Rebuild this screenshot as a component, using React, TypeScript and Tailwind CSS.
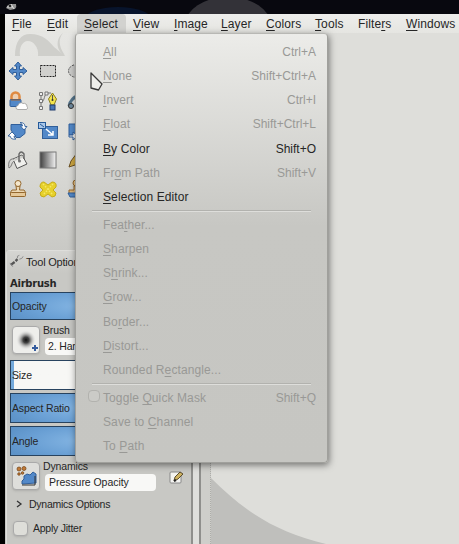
import React from "react";

/** Renders a label whose mnemonic letter follows an underscore. */
function Label({ text }: { text: string }) {
  const i = text.indexOf("_");
  if (i < 0) return <>{text}</>;
  return (
    <>
      {text.slice(0, i)}
      <span className="underline underline-offset-2">{text[i + 1]}</span>
      {text.slice(i + 2)}
    </>
  );
}

type Item = { label: string; keys?: string; on?: boolean; check?: boolean };

const groups: Item[][] = [
  [
    { label: "_All", keys: "Ctrl+A" },
    { label: "_None", keys: "Shift+Ctrl+A" },
    { label: "_Invert", keys: "Ctrl+I" },
    { label: "_Float", keys: "Shift+Ctrl+L" },
    { label: "_By Color", keys: "Shift+O", on: true },
    { label: "Fr_om Path", keys: "Shift+V" },
    { label: "_Selection Editor", on: true },
  ],
  [
    { label: "Fea_ther..." },
    { label: "_Sharpen" },
    { label: "S_hrink..." },
    { label: "_Grow..." },
    { label: "Bo_rder..." },
    { label: "_Distort..." },
    { label: "Rounded R_ectangle..." },
  ],
  [
    { label: "Toggle _Quick Mask", keys: "Shift+Q", check: true },
    { label: "Save to _Channel" },
    { label: "To _Path" },
  ],
];

const Icon = ({ children }: { children: React.ReactNode }) => (
  <svg viewBox="0 0 20 20" className="h-5 w-5">
    {children}
  </svg>
);

const blue = { fill: "#5288c8", stroke: "#315f9a", strokeWidth: 1 };

const tools: React.ReactNode[] = [
  <path {...blue} d="M10 1l3.500 4h-2v3.500h3.500v-2l4 3.500-4 3.500v-2h-3.500v3.500h2L10 19l-3.500-4h2v-3.500H5v2L1 10l4-3.500v2h3.500V5h-2z" />,
  <>
    <rect x="2.500" y="4.500" width="15" height="11" fill="#d0d0cd" />
    <rect x="2.500" y="4.500" width="15" height="11" fill="none" stroke="#222" strokeDasharray="2 1" />
  </>,
  <ellipse cx="10" cy="10" rx="8.500" ry="6.500" fill="#ccccca" stroke="#555" strokeDasharray="2 1" />,
  <>
    <path d="M3.500 9V5.500a4 4 0 018 0V9" fill="#ecd0b4" stroke="#df8a42" strokeWidth="2.500" />
    <rect x="2" y="8.500" width="11" height="7" rx="1" {...blue} />
    <path d="M3 9h9" stroke="#9d6535" />
    <path d="M10 18.500a2 2 0 010-4 3 3 0 015-2 3 3 0 014 3 1.700 1.700 0 01-1 3z" fill="#fff" stroke="#999" strokeWidth=".8" />
  </>,
  <>
    <path d="M3 3v15M3 12C7 10 6 3 9 2h4" fill="none" stroke="#777" />
    <path d="M1.500 1.500h3v3h-3zM1.500 8.500h3v3h-3zM1.500 15.500h3v3h-3zM7 1h3v3H7z" fill="#eee" stroke="#777" />
    <path d="M14.500 2l4 6-2.500 6h-3l-2.500-6z" fill="#f3e44d" stroke="#8b7e22" />
    <path d="M14.500 4v5" stroke="#555" />
    <circle cx="14.500" cy="9" r="1" fill="#333" />
    <rect x="12" y="14" width="5" height="5" fill="#4976b5" stroke="#203d6f" />
  </>,
  <>
    <path d="M2 15C3 10 7 6 12 4" fill="none" stroke="#54738a" strokeWidth="3" />
    <circle cx="4" cy="15" r="2.500" fill="#6f8ba0" stroke="#333" />
  </>,
  <>
    <path {...blue} d="M3 3.500h11l3 3v6l-5 4H8L3 9z" />
    <path d="M0 15l4-4 4 4H6q0 2.500 2 3-5 1-6-3zM12 1.500q5 0 5 4l2 0-3 3.500-3.500-4h2q0-2-2.500-3.500z" fill="#fff" stroke="#315f9a" strokeWidth=".9" />
  </>,
  <>
    <rect x="4.500" y="5.500" width="15" height="12" {...blue} />
    <rect x=".5" y="1.500" width="7" height="6" fill="#a9c7e9" stroke="#245998" />
    <path d="M8 8l7 6m0-4v4h-5" fill="none" stroke="#fff" strokeWidth="1.500" />
    <path d="M2 3l4 3" stroke="#245998" />
  </>,
  <>
    <path {...blue} d="M2 3h15l-3 11H2z" />
    <path d="M2 14h4v-3l5 4-5 4v-3H2z" fill="#eee" stroke="#315f9a" />
  </>,
  <>
    <path d="M5 9L14 5l5 9-10 4.500z" fill="#f0f0ed" stroke="#555" />
    <path d="M6 9L14 5.500l1.500 2L7 11z" fill="#cfcfcb" />
    <path d="M6 9C1 8 0 14 1 18c3-1 2-5 5-7" fill="#d7d7d4" stroke="#777" />
    <path d="M11 11V4q2-4 5 0v5" fill="none" stroke="#666" strokeWidth="1.400" />
    <circle cx="11.500" cy="11" r="1.500" fill="#777" />
  </>,
  <>
    <defs>
      <linearGradient id="fade">
        <stop stopColor="#3f3f3f" />
        <stop offset="1" stopColor="#f5f5f5" />
      </linearGradient>
    </defs>
    <rect x="2" y="2" width="16" height="16" fill="url(#fade)" stroke="#777" />
  </>,
  <path d="M2 17l2-6L10 3l5 3-7 9z" fill="#cda743" stroke="#6b5123" />,
  <>
    <path d="M8 7h4l-.5 4H16l2 3H2l2-3h4.500z" fill="#ecd8b4" stroke="#94672d" />
    <circle cx="10" cy="4.500" r="3" fill="#f4e6cb" stroke="#94672d" />
    <rect x="2.500" y="13.500" width="15" height="4" rx="1" fill="#e6c898" stroke="#94672d" />
  </>,
  <>
    <path d="M6 3l4 3 4-3q5 0 4 5l-3 3 3 3q0 4-4 4l-4-3-4 3q-4 0-4-4l3-3-3-3q0-5 4-5z" fill="#e6d02c" stroke="#c6ad19" strokeLinejoin="round" />
    <path d="M5 5l10 11M15 5L5 16" stroke="#f5e866" strokeWidth="1.500" strokeDasharray="1.500 1.500" />
  </>,
  <>
    <circle cx="9" cy="4" r="3" fill="#e8c58b" stroke="#94672d" />
    <path d="M7 7h4v4h5v4H2v-4h5z" fill="#dfb678" stroke="#94672d" />
    <path {...blue} d="M1 14h14v4H3z" />
  </>,
];

function Slider({ name, className }: { name: string; className: string }) {
  return (
    <div
      className={`flex w-[176px] shrink-0 items-center border border-[#28435f] pl-px ${className}`}
    >
      {name}
    </div>
  );
}

const blueFill =
  "bg-[radial-gradient(ellipse_75px_22px_at_67px_50%,#83b4e2,#699fd4_65%,#5d93c8)]";

export default function App() {
  const menus = [
    ["_File", "w-[35px]"],
    ["_Edit", "w-[37px]"],
    ["_Select", "w-[49px]"],
    ["_View", "w-[41px]"],
    ["_Image", "w-[47px]"],
    ["_Layer", "w-[45px]"],
    ["_Colors", "w-[49px]"],
    ["_Tools", "w-[43px]"],
    ["Filte_rs", "w-[48px]"],
    ["_Windows", "w-[59px]"],
  ];
  return (
    <div className="relative flex h-[544px] w-[459px] flex-col overflow-hidden bg-black font-['Liberation_Sans',Arial,sans-serif] text-[12px] leading-none text-[#262626]">
      <header className="h-3.5 shrink-0 bg-[#08080f]">
        <svg viewBox="0 0 459 14" className="block h-3.5 w-[459px]">
          <ellipse cx="118" cy="20" rx="34" ry="13" fill="#08142c" />
          <ellipse cx="228" cy="25" rx="43" ry="28" fill="#333238" />
          <path d="M6 8q1-3 4-4l6 0q1 3-1 5l-5 1z" fill="#929292" />
          <path d="M7 7h6M11 4l3 5" stroke="#ddd" />
          <circle cx="10" cy="6" r="1.200" fill="#222" />
        </svg>
      </header>

      <div className="ml-[5px] flex h-[530px] flex-col bg-[#dcdcd8]">
        <nav className="flex h-[19px] shrink-0 bg-gradient-to-b from-[#eeeeec] to-[#e5e5e1] tracking-[.1px]">
          {menus.map(([m, w]) => (
            <div
              key={m}
              className={`flex shrink-0 items-center whitespace-nowrap pl-[7px] pt-px ${w} ${m === "_Select" ? "rounded-t bg-[#d2d2cf] pl-[6px]" : ""}`}
            >
              <span>
                <Label text={m} />
              </span>
            </div>
          ))}
        </nav>

        <div className="flex min-h-0 flex-1">
          <aside className="flex w-[186px] shrink-0 flex-col bg-[#c6c6c2]">
            <div className="h-[217px] shrink-0 bg-gradient-to-b from-[#e6e6e3] via-[#dededa] to-[#c9c9c5]">
              <svg viewBox="0 0 100 23" className="mb-[5px] block h-[23px] w-[100px]">
                <path d="M10 23C10 8 16 1 25 1C38 1 44 8 49 14L60 23H33C34 14 28 8 23 8C17 8 14 15 15 23Z" fill="#cfcfcb" />
                <path d="M58 0C53 6 54 13 59 21L60 23C50 17 51 5 58 0Z" fill="#cfcfcb" />
              </svg>
              <div className="grid grid-cols-[30px_29px_29px] grid-rows-[30px_30px_29px_29px_28px] pl-[3px]">
                {tools.map((t, i) => (
                  <Icon key={i}>{t}</Icon>
                ))}
              </div>
            </div>

            <section className="ml-px flex flex-1 flex-col rounded-tl border-l border-t border-[#dededb] bg-[#c8c8c4]">
              <div className="flex h-[22px] shrink-0 items-center bg-gradient-to-b from-[#d5d5d2] to-[#c8c8c4] pl-[2px] text-[11px] tracking-[-.2px]">
                <svg viewBox="0 0 17 18" className="mr-px h-[18px] w-[16px]">
                  <path d="M2 12l4-3M7 8l2-2" stroke="#555" strokeWidth="2.500" />
                  <path d="M1 10l3 4M9 5q-1-3 2-3m0 4q3 0 4-3" fill="none" stroke="#888" />
                </svg>
                Tool Option
              </div>
              <h1 className="flex h-[19px] shrink-0 items-center pl-[3px] pt-[2px] font-['DejaVu_Sans',sans-serif] text-[10px] font-bold tracking-[-.25px]">
                Airbrush
              </h1>
              <div className="flex flex-col pl-[3px] text-[10.5px] tracking-[-.15px]">
                <Slider name="Opacity" className={`h-[28px] ${blueFill}`} />
                <div className="flex h-[40px] pt-[6px]">
                  <div className="ml-[2px] flex h-[28px] w-[28px] shrink-0 items-center justify-center rounded border border-[#aaa] bg-[#eeeeeb] shadow-sm">
                    <svg viewBox="0 0 26 26" className="h-[26px] w-[26px]">
                      <defs>
                        <radialGradient id="brush">
                          <stop stopColor="#111" />
                          <stop offset=".3" stopColor="#444" />
                          <stop offset="1" stopColor="#eee" stopOpacity="0" />
                        </radialGradient>
                      </defs>
                      <circle cx="13" cy="13" r="10" fill="url(#brush)" />
                      <path d="M19 21h6m-3-3v6" stroke="#355c9e" strokeWidth="2" />
                    </svg>
                  </div>
                  <div className="ml-[2px] -mt-px flex flex-col">
                    <span className="pl-px">Brush</span>
                    <div className="ml-[3px] mt-[2px] flex h-[17px] w-[112px] items-center rounded bg-[#f8f8f6] pl-[3px]">2. Har</div>
                  </div>
                </div>
                <Slider name="Size" className="h-[30px] bg-gradient-to-r from-[#73a9dc] from-[3px] to-[#f7f7f5] to-[3px]" />
                <Slider name="Aspect Ratio" className={`mt-[3px] h-[30px] ${blueFill}`} />
                <Slider name="Angle" className={`mt-[3px] h-[30px] ${blueFill}`} />
                <div className="flex h-[37px] pt-[6px]">
                  <div className="ml-[2px] flex h-[28px] w-[28px] shrink-0 items-center justify-center rounded border border-[#aaa] bg-[#dededb] shadow-sm">
                    <svg viewBox="0 0 24 24" className="h-6 w-6">
                      <path d="M8 20v-3l2-2v-3l3-2 3 1 3-3 3 2v9z" {...blue} />
                      <path d="M21 12v9H8" fill="none" stroke="#333" />
                      <g fill="#c17a37" stroke="#704015" strokeWidth=".7">
                        <circle cx="5" cy="5" r="2" />
                        <circle cx="10" cy="4.500" r="2" />
                        <circle cx="5" cy="10" r="1.300" />
                        <circle cx="8.500" cy="9" r="1.300" />
                      </g>
                    </svg>
                  </div>
                  <div className="ml-[2px] -mt-px flex flex-col">
                    <span className="pl-px">Dynamics</span>
                    <div className="ml-[3px] mt-[2px] flex h-[17px] w-[111px] items-center rounded bg-[#f8f8f6] pl-[4px] tracking-[-.05px]">Pressure Opacity</div>
                  </div>
                  <svg viewBox="0 0 15 15" className="ml-[13px] mt-[8px] h-[15px] w-[15px]">
                    <rect x="1" y="2" width="11" height="11" rx="1" fill="#f4f4f1" stroke="#888" />
                    <path d="M5 11l1-4 5-5 3 2-5 5z" fill="#ceb260" stroke="#5a4c2c" />
                    <path d="M5 11l2-1" stroke="#222" strokeWidth="2" />
                  </svg>
                </div>
                <div className="mt-[-4px] flex h-[30px] items-center pl-[6px] tracking-[-.25px]">
                  <svg viewBox="0 0 7 8" className="mr-[6px] h-2 w-[7px]">
                    <path d="M1 1l4 3-4 3" fill="none" stroke="#333" strokeWidth="1.300" />
                  </svg>
                  Dynamics Options
                </div>
                <div className="flex h-[19px] items-center pl-[3px] tracking-[-.25px]">
                  <i className="mr-[5px] h-[15px] w-[15px] rounded border border-[#aaa] bg-[#deded9] shadow-sm" />
                  Apply Jitter
                </div>
              </div>
            </section>
          </aside>
          <div className="w-[10px] shrink-0 border-x-2 border-y-0 border-[#8f8f8c] bg-[#dfdfdc]" />
          <div className="w-[10px] shrink-0 border-r border-dotted border-[#adada9] bg-[#cececa]" />
          <main className="flex flex-1 items-end bg-[#dededa]">
            <svg viewBox="0 0 248 66" className="block h-[66px] w-[248px]">
              <path d="M0 0C34 34 65 54 115 66H0z" fill="#bfbfbc" />
            </svg>
          </main>
        </div>
      </div>

      {/* Open Select menu */}
      <div className="absolute left-[75px] top-[33px] h-[430px] w-[253px] rounded border border-[#a0a09c] border-t-[#b8b8b4] bg-gradient-to-b from-[#ecece9] from-0% via-[#c7c7c3] via-45% to-[#c6c6c2] pt-[6px] tracking-[.1px] shadow-[1px_2px_7px_rgba(0,0,0,0.5)]">
        {groups.map((g, gi) => (
          <React.Fragment key={gi}>
            {gi > 0 && <div className="mx-4 my-[1px] h-[2px] border-b border-t border-b-[#dededb] border-t-[#b2b2ae]" />}
            {g.map((it) => (
              <div
                key={it.label}
                className={`flex h-[24.15px] items-center pr-[11px] ${it.on ? "text-[#262626]" : "text-[#999996]"}`}
              >
                <span className="flex w-[27px] shrink-0 justify-end pr-[3px]">
                  {it.check && <i className="mb-1 h-3 w-3 rounded-sm border border-[#b2b2ae] bg-[#cbcbc7]" />}
                </span>
                <span>
                  <Label text={it.label} />
                </span>
                <span className="ml-auto tracking-normal">{it.keys}</span>
              </div>
            ))}
          </React.Fragment>
        ))}
      </div>
      <svg viewBox="0 0 14 21" className="absolute left-[90px] top-[72px] h-[21px] w-[14px]">
        <path d="M1 1l11 11-3.500 6-7.500-2z" fill="#eeeeeb" stroke="#383838" strokeWidth="1.300" strokeLinejoin="round" />
      </svg>
    </div>
  );
}
